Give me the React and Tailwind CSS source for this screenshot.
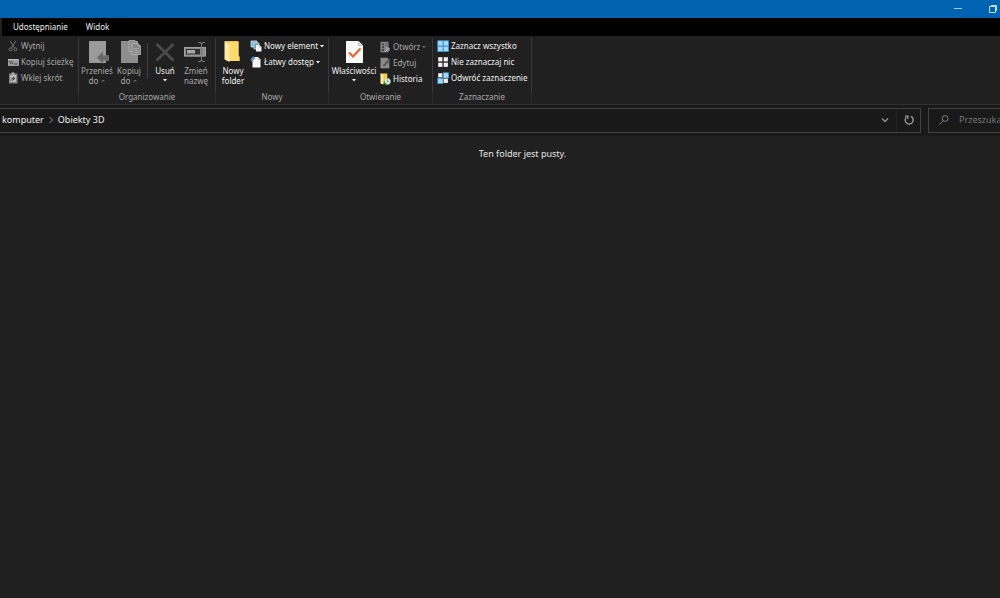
import React from "react";

const Caret = ({ className = "" }) => (
  <svg viewBox="0 0 4 3" className={`h-[3px] w-1 shrink-0 ${className}`} aria-hidden="true">
    <path d="M0 0h4L2 2.6z" fill="currentColor" />
  </svg>
);

const CutIcon = () => (
  <svg viewBox="0 0 12 12" className="size-3" fill="none" stroke="#858585" strokeWidth="0.8">
    <path d="M3.2 0.8L7.6 8M8.8 0.8L4.4 8" />
    <circle cx="3.6" cy="9.4" r="1.5" />
    <circle cx="8.4" cy="9.4" r="1.5" />
  </svg>
);

const PathIcon = () => (
  <svg viewBox="0 0 12 12" className="size-3">
    <rect x="1" y="3" width="11" height="7" fill="#9a9a9a" />
    <path d="M1 3.5h11" stroke="#c4c4c4" strokeWidth="0.8" />
    <path d="M2.5 5l1.5 3M4.5 5L6 8M7 8h3.5" stroke="#3c3c3c" strokeWidth="0.9" />
  </svg>
);

const PasteIcon = () => (
  <svg viewBox="0 0 12 12" className="size-3">
    <path d="M2 1.5h8.5v10H2z" fill="#858585" />
    <path d="M4.5 0.5h3v2h-3z" fill="#b5b5b5" />
    <path d="M3.5 3h5.5v7H3.5z" fill="#bcbcbc" />
    <path d="M4.6 9V6.8q0-1 1-1H6V4.3l2.2 2.2L6 8.4V7H5.5v2z" fill="#484848" />
  </svg>
);

const MoveIcon = () => (
  <svg viewBox="0 0 24 26" className="h-[26px] w-6">
    <path d="M4 3h17v22H4z" fill="#9a9a9a" />
    <path d="M12 19.5l6-6v4h6v5h-6v3z" fill="#696969" stroke="#858585" strokeWidth="0.5" />
  </svg>
);

const CopyIcon = () => (
  <svg viewBox="0 0 24 26" className="h-[26px] w-6">
    <path d="M4 3h17v22H4z" fill="#8e8e8e" />
    <path d="M12 2.5h6l2 2v9h-8z" fill="#8b8b8b" stroke="#b0b0b0" strokeWidth="0.8" />
    <path d="M15 5.5h6l2.6 2.6v8.4H15z" fill="#858585" stroke="#bababa" strokeWidth="0.8" />
    <path d="M21 5.5v2.6h2.6M16.5 10.5h5.5M16.5 12.5h5.5M16.5 14.5h5.5" fill="none" stroke="#bababa" strokeWidth="0.6" />
  </svg>
);

const DeleteIcon = () => (
  <svg viewBox="0 0 24 26" className="h-[26px] w-6">
    <path d="M3.5 6l17 16.5M20.5 6l-17 16.5" stroke="#4b4b4b" strokeWidth="2.8" />
  </svg>
);

const RenameIcon = () => (
  <svg viewBox="0 0 24 26" className="h-[26px] w-6">
    <path d="M0 9h22v9.5H0z" fill="#8a8a8a" />
    <path d="M0.5 9.5h21v8.5h-21z" fill="none" stroke="#a0a0a0" />
    <path d="M2 11h14v5.5H2z" fill="#303030" />
    <path d="M3 12h8v3.5H3z" fill="#a8a8a8" />
    <path d="M14 4.5h2.2l1.3 1.2 1.3-1.2H21M17.5 5.7v17M14 23.5h2.2l1.3-1.2 1.3 1.2H21" fill="none" stroke="#777777" strokeWidth="1.1" />
  </svg>
);

const FolderIcon = () => (
  <svg viewBox="0 0 24 26" className="h-[26px] w-6">
    <path d="M4 3h13.5v14.5l1 1.5v4H8z" fill="#f2c34c" />
    <path d="M8 4h9.5v13.5l1 1.5v4H8z" fill="#ffd968" />
    <path d="M3.5 3l5 3v18l-5-2.5z" fill="#ffe9a6" />
  </svg>
);

const NewItemIcon = () => (
  <svg viewBox="0 0 12 12" className="size-3">
    <path d="M1 1h6v6H1z" fill="#7eb4d8" stroke="#d5e4ed" strokeWidth="0.8" />
    <path d="M4 3h5v6H4z" fill="#5c9fb0" stroke="#e2e2e2" strokeWidth="0.8" />
    <path d="M6 5h3.5L11.5 7v4.5H6z" fill="#f5f5f5" />
    <path d="M9.5 5v2h2" fill="none" stroke="#999999" strokeWidth="0.6" />
  </svg>
);

const EasyAccessIcon = () => (
  <svg viewBox="0 0 12 12" className="size-3">
    <path d="M2.5 1h5.5L10.5 3.5v8h-8z" fill="#f7f7f7" />
    <path d="M8 1v2.5h2.5" fill="none" stroke="#a5a5a5" strokeWidth="0.7" />
    <path d="M1.3 5.5V3.2q0-1 1-1H4M3 0.7l1.6 1.5L3 3.7" fill="none" stroke="#3b8fd4" strokeWidth="1.1" />
  </svg>
);

const PropertiesIcon = () => (
  <svg viewBox="0 0 24 26" className="h-[26px] w-6">
    <path d="M4 3h12.5L21 7.5V25H4z" fill="#f7f7f7" />
    <path d="M16.5 3v4.5H21" fill="#d9d9d9" stroke="#aaaaaa" strokeWidth="0.6" />
    <path d="M7 14.5l4 4 7.5-8" fill="none" stroke="#ec642b" strokeWidth="2.2" />
  </svg>
);

const OpenIcon = () => (
  <svg viewBox="0 0 12 12" className="size-3">
    <path d="M1.5 0.8h8v10.5h-8z" fill="#848484" />
    <path d="M3 2.5h2v1.8H3zM3 5.3h2v1.8H3zM3 8.1h2v1.8H3z" fill="#414141" />
    <path d="M6.2 2.8h2.3M6.2 5h2.3" stroke="#4b4b4b" strokeWidth="0.8" />
    <path d="M6 11L9.5 7.5M7 7h3v3" fill="none" stroke="#b7b7b7" strokeWidth="1" />
  </svg>
);

const EditIcon = () => (
  <svg viewBox="0 0 12 12" className="size-3">
    <path d="M1.5 0.8h6.8l2 2v8.5H1.5z" fill="#8a8a8a" />
    <path d="M4 9.5L10.8 2.5" stroke="#555555" strokeWidth="1.8" />
    <path d="M2.8 10.7l.6-2 1.4 1.4z" fill="#b8b8b8" />
  </svg>
);

const HistoryIcon = () => (
  <svg viewBox="0 0 12 12" className="size-3">
    <path d="M1.5 0.5h6.8v10H3z" fill="#f5cb55" />
    <path d="M1.5 0.5l2.8 1v10l-2.8-1z" fill="#ffe9a4" />
    <circle cx="8.4" cy="8.4" r="3" fill="#e8f1e8" stroke="#a9c9a7" strokeWidth="0.8" />
    <path d="M8.4 6.5v2h1.6" fill="none" stroke="#426a48" strokeWidth="0.7" />
    <path d="M5.2 8a3.2 3.2 0 0 0 3 3.3" fill="none" stroke="#3c9b45" strokeWidth="1.3" />
  </svg>
);

const SelectionIcon = ({ tiles }) => (
  <svg viewBox="0 0 12 12" className="size-3">
    {[[1, 1], [6.5, 1], [1, 6.5], [6.5, 6.5]].map(([x, y], i) =>
      tiles[i] ? (
        <rect key={i} x={x - 0.2} y={y - 0.2} width="5.2" height="5.2" fill="#a9d8f7" stroke="#3f9be0" strokeWidth="0.8" />
      ) : (
        <rect key={i} x={x + 0.2} y={y + 0.2} width="4.2" height="4.2" fill="#f0f0f0" />
      )
    )}
  </svg>
);

const Small = ({ icon, children, dim, caret, dimCaret }) => (
  <button
    type="button"
    className={`flex h-4 items-center gap-0.5 whitespace-nowrap text-left ${dim ? "text-[#a8a8a8]" : "text-[#f0f0f0]"}`}
  >
    <span className="shrink-0">{icon}</span>
    <span>{children}</span>
    {caret && <Caret className={dimCaret ? "text-[#606060]" : ""} />}
  </button>
);

const Large = ({ icon, lines, dim, caret, inlineCaret, className = "" }) => (
  <button
    type="button"
    className={`flex flex-col items-center leading-[10px] ${dim ? "text-[#a8a8a8]" : "text-[#f0f0f0]"} ${className}`}
  >
    {icon}
    <span className="mt-[2px] whitespace-nowrap">{lines[0]}</span>
    {lines[1] && (
      <span className="flex items-center gap-[3px] whitespace-nowrap">
        {lines[1]}
        {inlineCaret && <Caret className="text-[#585858]" />}
      </span>
    )}
    {caret && <Caret className="mt-[3px]" />}
  </button>
);

const Group = ({ label, className, children }) => (
  <section aria-label={label || "Schowek"} className={`flex shrink-0 flex-col ${className}`}>
    <div className="flex h-[54px] items-start border-r border-[#383838]">{children}</div>
    <div className="h-3 border-r border-[#282828] text-center leading-[10px] text-[#a8a8a8]">{label}</div>
  </section>
);

export default function App() {
  return (
    <div className="flex min-h-screen flex-col overflow-hidden bg-[#202020] font-['Noto_Sans','Open_Sans',sans-serif] text-[8px] text-[#f0f0f0]">
      <header className="flex h-[18px] items-center justify-end gap-[25px] bg-[#0063b1] pr-[2px]">
        <button type="button" aria-label="Minimalizuj">
          <svg viewBox="0 0 10 10" className="size-[10px]">
            <path d="M1 4.5h8" stroke="#a9cbe6" strokeWidth="1" />
          </svg>
        </button>
        <button type="button" aria-label="Przywróć w dół">
          <svg viewBox="0 0 10 10" className="size-[10px]" fill="none" stroke="#c4dcf0">
            <path d="M1.5 2.5h6v6h-6z" />
            <path d="M3 1.5h5.5V7" />
          </svg>
        </button>
      </header>

      <nav className="ml-0.5 flex h-[18px] items-center gap-[18px] bg-black pl-[11px]">
        <button type="button">Udostępnianie</button>
        <button type="button">Widok</button>
      </nav>

      <div className="flex h-[69px] items-start border-b border-[#303030] pt-0.5">
        <Group className="w-[79px]">
          <div className="pl-[7px]">
            <Small dim icon={<CutIcon />}>Wytnij</Small>
            <Small dim icon={<PathIcon />}>Kopiuj ścieżkę</Small>
            <Small dim icon={<PasteIcon />}>Wklej skrót</Small>
          </div>
        </Group>

        <Group label="Organizowanie" className="w-[137px]">
          <Large dim className="w-9" icon={<MoveIcon />} lines={["Przenieś", "do"]} inlineCaret />
          <Large dim className="w-7" icon={<CopyIcon />} lines={["Kopiuj", "do"]} inlineCaret />
          <div className="ml-1 mt-[5px] h-9 w-px bg-[#404040]" />
          <Large className="ml-0.5 w-[30px]" icon={<DeleteIcon />} lines={["Usuń"]} caret />
          <Large dim className="w-8" icon={<RenameIcon />} lines={["Zmień", "nazwę"]} />
        </Group>

        <Group label="Nowy" className="w-[113px]">
          <Large className="w-[34px]" icon={<FolderIcon />} lines={["Nowy", "folder"]} />
          <div>
            <Small caret icon={<NewItemIcon />}>Nowy element</Small>
            <Small caret icon={<EasyAccessIcon />}>Łatwy dostęp</Small>
          </div>
        </Group>

        <Group label="Otwieranie" className="w-[104px]">
          <Large className="w-[50px]" icon={<PropertiesIcon />} lines={["Właściwości"]} caret />
          <div className="pt-px">
            <Small dim caret dimCaret icon={<OpenIcon />}>Otwórz</Small>
            <Small dim icon={<EditIcon />}>Edytuj</Small>
            <Small icon={<HistoryIcon />}>Historia</Small>
          </div>
        </Group>

        <Group label="Zaznaczanie" className="w-[99px]">
          <div className="pl-1">
            <Small icon={<SelectionIcon tiles={[1, 1, 1, 1]} />}>Zaznacz wszystko</Small>
            <Small icon={<SelectionIcon tiles={[0, 0, 0, 0]} />}>Nie zaznaczaj nic</Small>
            <Small icon={<SelectionIcon tiles={[0, 1, 1, 0]} />}>Odwróć zaznaczenie</Small>
          </div>
        </Group>
      </div>

      <div className="flex h-[31px] items-center gap-[7px] bg-[#191919] pb-px text-[9px]">
        <div className="flex h-[25px] flex-1 items-center border-y border-r border-[#434343] pl-0.5">
          <a href="#komputer">komputer</a>
          <svg viewBox="0 0 8 8" className="mx-[3px] size-2" fill="none" stroke="#909090">
            <path d="M2.5 1L5.5 4l-3 3" />
          </svg>
          <a href="#obiekty">Obiekty 3D</a>
          <button type="button" aria-label="Poprzednie lokalizacje" className="ml-auto flex h-full w-6 items-center justify-center border-r border-[#222222]">
            <svg viewBox="0 0 10 10" className="size-[10px]" fill="none" stroke="#8f8f8f" strokeWidth="1.4">
              <path d="M2 3.5l3 3 3-3" />
            </svg>
          </button>
          <button type="button" aria-label="Odśwież" className="flex h-full w-[23px] items-center justify-center">
            <svg viewBox="0 0 12 12" className="size-3" fill="none" stroke="#a0a0a0" strokeWidth="1.3">
              <path d="M7.8 2.4A4 4 0 1 1 3.2 3.4M2 2.2h2.8V5" />
            </svg>
          </button>
        </div>
        <label className="flex h-[25px] w-[72px] items-center border-y border-l border-[#434343] pl-[9px]">
          <svg viewBox="0 0 12 12" className="size-3 shrink-0" fill="none" stroke="#808080">
            <circle cx="7.2" cy="4.5" r="2.9" />
            <path d="M5.2 6.7L1.3 10.6" />
          </svg>
          <input
            type="text"
            aria-label="Przeszukaj"
            placeholder="Przeszukaj: Obiekty 3D"
            className="ml-[9px] w-0 min-w-0 flex-1 bg-transparent outline-none placeholder:text-[#767676]"
          />
        </label>
      </div>

      <main className="flex-1 pl-[45px] pt-3 text-center text-[9px] leading-[12px] text-[#e4e4e4]">
        <p>Ten folder jest pusty.</p>
      </main>
    </div>
  );
}
